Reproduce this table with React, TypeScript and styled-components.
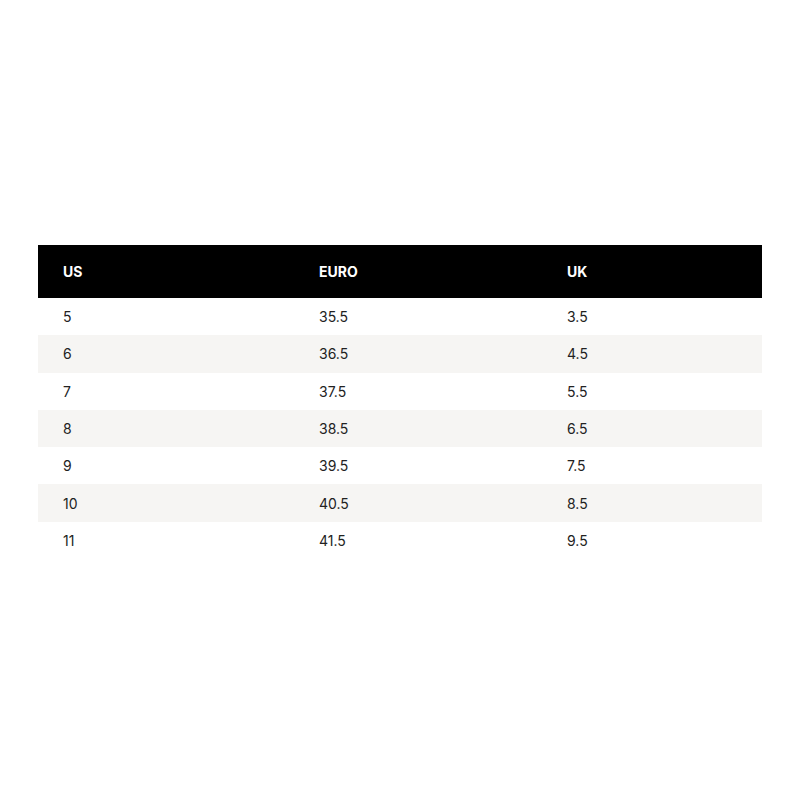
import React from "react";
import styled, { createGlobalStyle } from "styled-components";

const GlobalStyle = createGlobalStyle`
  html, body {
    margin: 0;
    padding: 0;
    background: #fff;
    font-family: Inter, "Liberation Sans", sans-serif;
  }
`;

const sizes = [
  { us: "5", euro: "35.5", uk: "3.5" },
  { us: "6", euro: "36.5", uk: "4.5" },
  { us: "7", euro: "37.5", uk: "5.5" },
  { us: "8", euro: "38.5", uk: "6.5" },
  { us: "9", euro: "39.5", uk: "7.5" },
  { us: "10", euro: "40.5", uk: "8.5" },
  { us: "11", euro: "41.5", uk: "9.5" },
];

const App: React.FC = () => {
  return (
    <Page>
      <GlobalStyle />
      <Chart>
        <HeadRow>
          <HeadCell>US</HeadCell>
          <HeadCell>EURO</HeadCell>
          <HeadCell>UK</HeadCell>
        </HeadRow>
        {sizes.map((s, i) => (
          <Row key={s.us} $striped={i % 2 === 1}>
            <Cell>{s.us}</Cell>
            <Cell>{s.euro}</Cell>
            <Cell>{s.uk}</Cell>
          </Row>
        ))}
      </Chart>
    </Page>
  );
};

export default App;

const Page = styled.div`
  min-height: 800px;
  display: flex;
  align-items: center;
  justify-content: center;
  box-sizing: border-box;
  padding: 4px 38px 0;
`;

const Chart = styled.div`
  width: 100%;
  display: flex;
  flex-direction: column;
`;

const HeadRow = styled.div`
  display: grid;
  grid-template-columns: 256px 248px 1fr;
  height: 53px;
  align-items: center;
  background: #000;
`;

const HeadCell = styled.div`
  padding-left: 25px;
  color: #fff;
  font-size: 14px;
  font-weight: 700;
`;

const Row = styled.div<{ $striped: boolean }>`
  display: grid;
  grid-template-columns: 256px 248px 1fr;
  height: 37.3px;
  align-items: center;
  background: ${(p) => (p.$striped ? "#f6f5f3" : "#fff")};
`;

const Cell = styled.div`
  padding-left: 25px;
  color: #222;
  font-size: 14px;
`;
